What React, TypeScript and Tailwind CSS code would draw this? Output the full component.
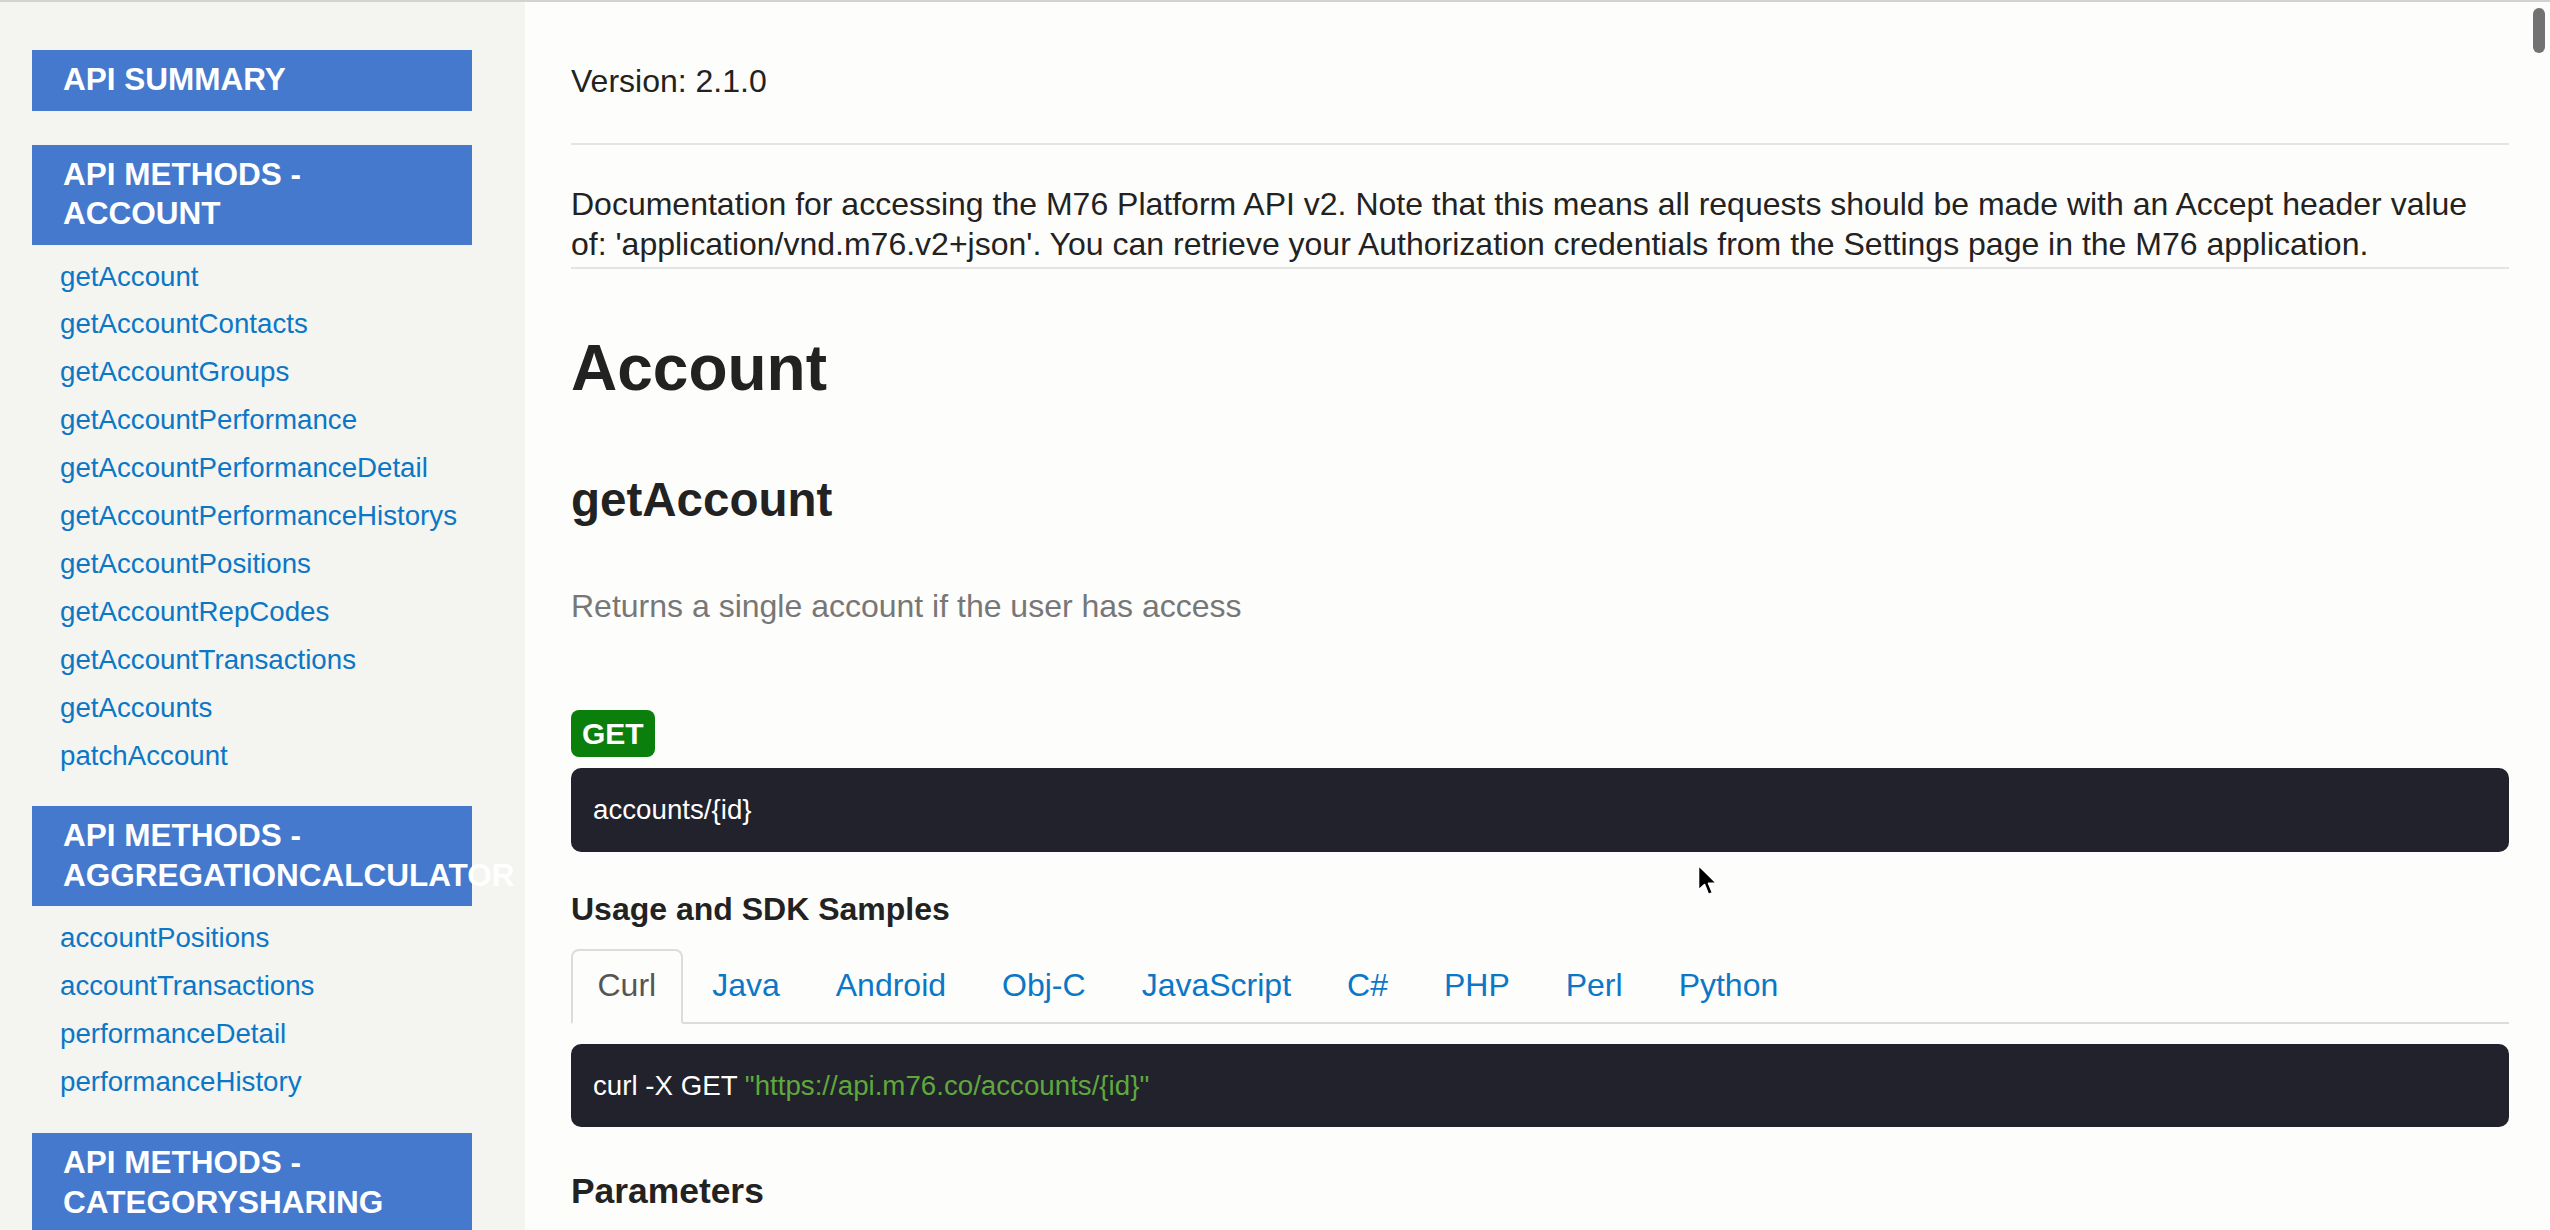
import React from "react";

const accountLinks = [
  "getAccount",
  "getAccountContacts",
  "getAccountGroups",
  "getAccountPerformance",
  "getAccountPerformanceDetail",
  "getAccountPerformanceHistorys",
  "getAccountPositions",
  "getAccountRepCodes",
  "getAccountTransactions",
  "getAccounts",
  "patchAccount",
];

const aggLinks = [
  "accountPositions",
  "accountTransactions",
  "performanceDetail",
  "performanceHistory",
];

const tabs = ["Curl", "Java", "Android", "Obj-C", "JavaScript", "C#", "PHP", "Perl", "Python"];

function NavHeader({ children, className = "" }: { children: React.ReactNode; className?: string }) {
  return (
    <div
      className={
        "w-[440px] bg-[#4479ce] pl-[31px] pr-[31px] pt-[10px] pb-[11px] text-[31.5px] leading-[39.5px] font-bold text-white " +
        className
      }
    >
      {children}
    </div>
  );
}

function NavLinks({ items }: { items: string[] }) {
  return (
    <ul className="pt-[8px] pb-[27px] pl-[28px]">
      {items.map((l) => (
        <li key={l} className="text-[27.7px] leading-[47.9px] text-[#0b77c6] whitespace-nowrap">
          <a href="#">{l}</a>
        </li>
      ))}
    </ul>
  );
}

export default function App() {
  return (
    <div
      className="relative flex w-[2550px] h-[1230px] overflow-hidden border-t-2 border-[#d2d2d2] bg-[#fdfdfb]"
      style={{ fontFamily: '"Liberation Sans", Arial, Helvetica, sans-serif' }}
    >
      <aside className="w-[525px] shrink-0 h-full overflow-hidden bg-[#f4f4f0] pt-[48px] pl-[32px]">
        <NavHeader className="mb-[34px]">API SUMMARY</NavHeader>
        <NavHeader>API METHODS - ACCOUNT</NavHeader>
        <NavLinks items={accountLinks} />
        <NavHeader>API METHODS - AGGREGATIONCALCULATOR</NavHeader>
        <NavLinks items={aggLinks} />
        <NavHeader>API METHODS - CATEGORYSHARING</NavHeader>
      </aside>

      <main className="flex-1 min-w-0 h-full overflow-hidden bg-[#fdfdfb] pl-[46px] pr-[41px] pt-[58.6px] text-[#222]">
        <p className="text-[32px] leading-[40px]">Version: 2.1.0</p>
        <div className="mt-[42px] h-[2px] bg-[#e4e4e4]" />
        <p className="mt-[39.3px] text-[32px] leading-[40px]">
          Documentation for accessing the M76 Platform API v2. Note that this means all requests should be made with an
          Accept header value of: 'application/vnd.m76.v2+json'. You can retrieve your Authorization credentials from the
          Settings page in the M76 application.
        </p>
        <div className="mt-[2.8px] h-[2px] bg-[#e4e4e4]" />

        <h1 className="mt-[64px] text-[64px] leading-[70.4px] font-bold text-[#222]">Account</h1>
        <h2 className="mt-[71.4px] text-[47.5px] leading-[52.25px] font-bold text-[#222]">getAccount</h2>
        <p className="mt-[59px] text-[32px] leading-[40px] text-[#777]">Returns a single account if the user has access</p>

        <div className="mt-[84.4px] flex">
          <span className="h-[47px] px-[11px] flex items-center rounded-[8px] bg-[#0b7f0b] text-white font-bold text-[30px]">
            GET
          </span>
        </div>
        <div className="mt-[11px] h-[84px] flex items-center pl-[22px] rounded-[10px] bg-[#21222c] text-white text-[27.7px]">
          accounts/&#123;id&#125;
        </div>

        <h3 className="mt-[37px] text-[32px] leading-[40px] font-bold text-[#222]">Usage and SDK Samples</h3>

        <ul className="mt-[20px] flex border-b-2 border-[#dcdcdc]">
          {tabs.map((t, i) => (
            <li key={t} className="mb-[-2px] mr-[3px]">
              <a
                href="#"
                className={
                  i === 0
                    ? "block px-[24.5px] pt-[14px] pb-[17px] text-[32px] leading-[40px] border-2 border-[#dcdcdc] border-b-transparent rounded-t-[8px] bg-[#fdfdfb] text-[#555]"
                    : "block px-[24.5px] pt-[14px] pb-[17px] text-[32px] leading-[40px] border-2 border-transparent rounded-t-[8px] text-[#0b77c6]"
                }
              >
                {t}
              </a>
            </li>
          ))}
        </ul>

        <div className="mt-[20px] h-[83px] flex items-center pl-[22px] rounded-[10px] bg-[#21222c] text-white text-[27.7px] whitespace-pre">
          <span>curl -X GET </span>
          <span className="text-[#5fa83c]">"https://api.m76.co/accounts/&#123;id&#125;"</span>
        </div>

        <h3 className="mt-[45px] text-[35.4px] leading-[39px] font-bold text-[#222]">Parameters</h3>
      </main>

      {/* overlay scrollbar thumb */}
      <div className="absolute left-[2533px] top-[6px] w-[12px] h-[45px] rounded-full bg-[#727272]" />

      {/* mouse cursor */}
      <svg className="absolute left-[1697px] top-[862px]" width="22" height="34" viewBox="0 0 22 34">
        <path
          d="M1.5 1.5 L1.5 26 L7.5 20.5 L11.5 30.5 L15.5 28.8 L11.5 19.2 L19.5 19.2 Z"
          fill="#000"
          stroke="#fff"
          strokeWidth="1.6"
          strokeLinejoin="round"
        />
      </svg>
    </div>
  );
}
